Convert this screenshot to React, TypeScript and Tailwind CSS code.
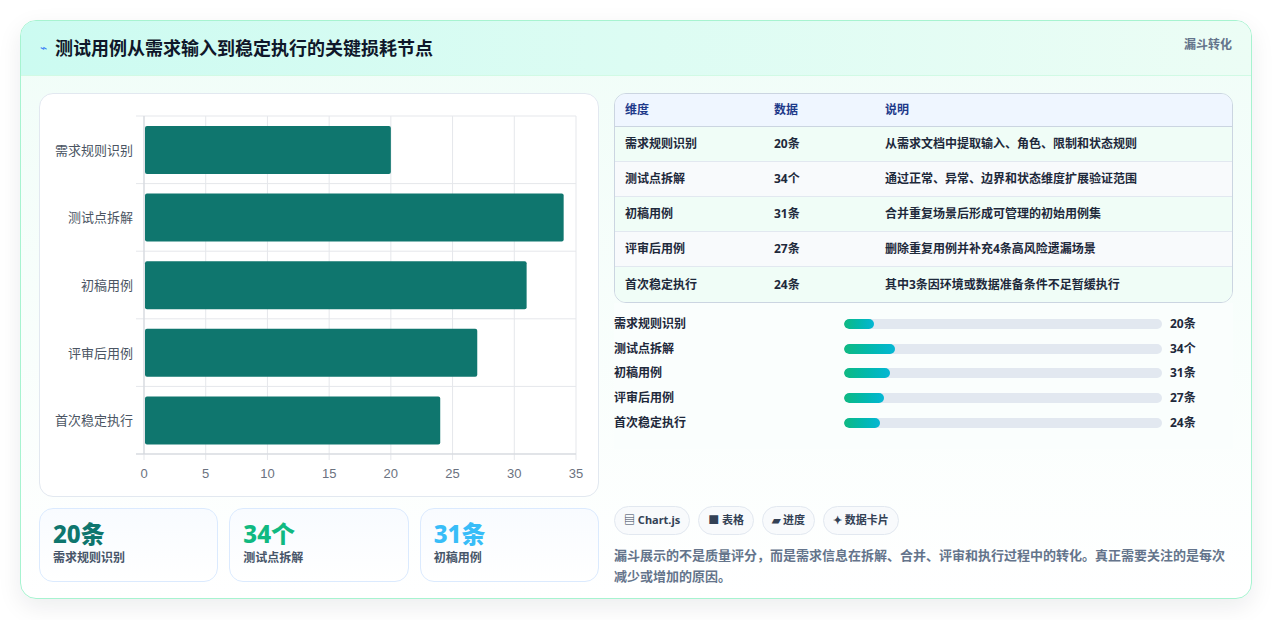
import React from "react";

const rows = [
  { n: "需求规则识别", v: 20, u: "条", d: "从需求文档中提取输入、角色、限制和状态规则" },
  { n: "测试点拆解", v: 34, u: "个", d: "通过正常、异常、边界和状态维度扩展验证范围" },
  { n: "初稿用例", v: 31, u: "条", d: "合并重复场景后形成可管理的初始用例集" },
  { n: "评审后用例", v: 27, u: "条", d: "删除重复用例并补充4条高风险遗漏场景" },
  { n: "首次稳定执行", v: 24, u: "条", d: "其中3条因环境或数据准备条件不足暂缓执行" },
];

function Chart() {
  const x0 = 104, w = 432, y0 = 22, h = 338, rh = h / 5;
  const sx = (v: number) => x0 + (v / 35) * w;
  return (
    <svg width="559" height="403" className="block">
      {[0, 5, 10, 15, 20, 25, 30, 35].map((t) => (
        <g key={t}>
          <line x1={sx(t)} x2={sx(t)} y1={y0} y2={y0 + h + 6} stroke="#e5e7eb" />
          <text x={sx(t)} y={384} textAnchor="middle" fontSize="13" fill="#6b7280" fontFamily="Liberation Sans, sans-serif">{t}</text>
        </g>
      ))}
      {[0, 1, 2, 3, 4, 5].map((i) => (
        <line key={i} x1={x0 - 8} x2={x0 + w} y1={y0 + i * rh} y2={y0 + i * rh} stroke="#e5e7eb" />
      ))}
      <line x1={x0 - 8} x2={x0 + w} y1={y0 + h} y2={y0 + h} stroke="#d1d5db" />
      <line x1={x0} x2={x0} y1={y0} y2={y0 + h} stroke="#d1d5db" />
      {rows.map((r, i) => (
        <g key={r.n}>
          <rect x={x0 + 1} y={y0 + i * rh + 10} width={sx(r.v) - x0 - 1} height={48} rx={2} fill="#0f766e" />
          <text x={93} y={y0 + i * rh + rh / 2 + 5} textAnchor="end" fontSize="13" fill="#4b5563" fontFamily="Noto Sans CJK SC, sans-serif">{r.n}</text>
        </g>
      ))}
    </svg>
  );
}

export default function App() {
  return (
    <div className="w-[1273px] h-[620px] bg-white p-[20px] pr-[21px]" style={{ fontFamily: '"Noto Sans", "Noto Sans CJK SC", sans-serif' }}>
      <div className="h-[579px] rounded-[16px] border border-[#a7f3d0] bg-gradient-to-b from-[#f0fdf8] to-white shadow-[0_8px_24px_rgba(15,23,42,0.08)] overflow-hidden flex flex-col">
        <div className="h-[55px] shrink-0 flex items-center justify-between px-[19px] bg-gradient-to-r from-[#ccfbf1] to-[#ecfdf5] border-b border-[#d1fae5]">
          <div className="flex items-center gap-[8px]">
            <span className="text-[#3b82f6] text-[12px]">⌁</span>
            <span className="text-[18px] font-bold text-[#0f172a]">测试用例从需求输入到稳定执行的关键损耗节点</span>
          </div>
          <span className="text-[12px] font-bold text-[#64748b] self-start mt-[15px]">漏斗转化</span>
        </div>
        <div className="flex gap-[15px] px-[18px] pt-[17px]">
          <div className="w-[560px] flex flex-col gap-[11px]">
            <div className="h-[404px] rounded-[14px] border border-[#e2e8f0] bg-white">
              <Chart />
            </div>
            <div className="grid grid-cols-3 gap-[11px]">
              {[
                ["20条", "需求规则识别", "text-[#0f766e]"],
                ["34个", "测试点拆解", "text-[#10b981]"],
                ["31条", "初稿用例", "text-[#38bdf8]"],
              ].map(([a, b, c]) => (
                <div key={b} className="h-[74px] rounded-[14px] border border-[#dbeafe] bg-gradient-to-b from-[#f8fbff] to-white px-[13px] pt-[10px]">
                  <div className={`text-[24px] leading-[30px] font-extrabold ${c}`}>{a}</div>
                  <div className="text-[12px] font-bold text-[#475569]">{b}</div>
                </div>
              ))}
            </div>
          </div>
          <div className="w-[619px] flex flex-col">
            <div className="rounded-[12px] border border-[#cbd5e1] overflow-hidden text-[12px] font-bold text-[#1e293b]">
              <div className="h-[33px] flex items-center bg-[#eff6ff] text-[#1e3a8a] border-b border-[#cbd5e1]">
                <div className="w-[159px] pl-[10px]">维度</div>
                <div className="w-[111px]">数据</div>
                <div>说明</div>
              </div>
              {rows.map((r, i) => (
                <div key={r.n} className={`h-[35px] flex items-center ${i < 4 ? "border-b border-[#e2e8f0]" : ""} ${i % 2 === 0 ? "bg-[#f0fdf7]" : "bg-[#f8fafc]"}`}>
                  <div className="w-[159px] pl-[10px]">{r.n}</div>
                  <div className="w-[111px]">{r.v}{r.u}</div>
                  <div>{r.d}</div>
                </div>
              ))}
            </div>
            <div className="flex flex-col pt-[9px] pb-[14px] bg-[#fafefd]">
              {rows.map((r) => (
                <div key={r.n} className="h-[24.6px] flex items-center text-[12px] font-bold text-[#1e293b]">
                  <div className="w-[230px]">{r.n}</div>
                  <div className="w-[318px] h-[10px] rounded-full bg-[#e2e8f0] overflow-hidden">
                    <div className="h-full rounded-full bg-gradient-to-r from-[#10b981] to-[#06b6d4]" style={{ width: `${r.v * 0.47}%` }} />
                  </div>
                  <div className="ml-[8px]">{r.v}{r.u}</div>
                </div>
              ))}
            </div>
            <div className="flex gap-[8px] mt-[57px]">
              {["▤ Chart.js", "■ 表格", "▰ 进度", "✦ 数据卡片"].map((t) => (
                <span key={t} className="h-[29px] px-[9px] flex items-center rounded-full border border-[#e2e8f0] bg-[#f8fafc] text-[11px] font-bold text-[#334155]">{t}</span>
              ))}
            </div>
            <p className="mt-[10px] text-[13px] leading-[21px] font-bold text-[#64748b]">漏斗展示的不是质量评分，而是需求信息在拆解、合并、评审和执行过程中的转化。真正需要关注的是每次减少或增加的原因。</p>
          </div>
        </div>
      </div>
    </div>
  );
}
